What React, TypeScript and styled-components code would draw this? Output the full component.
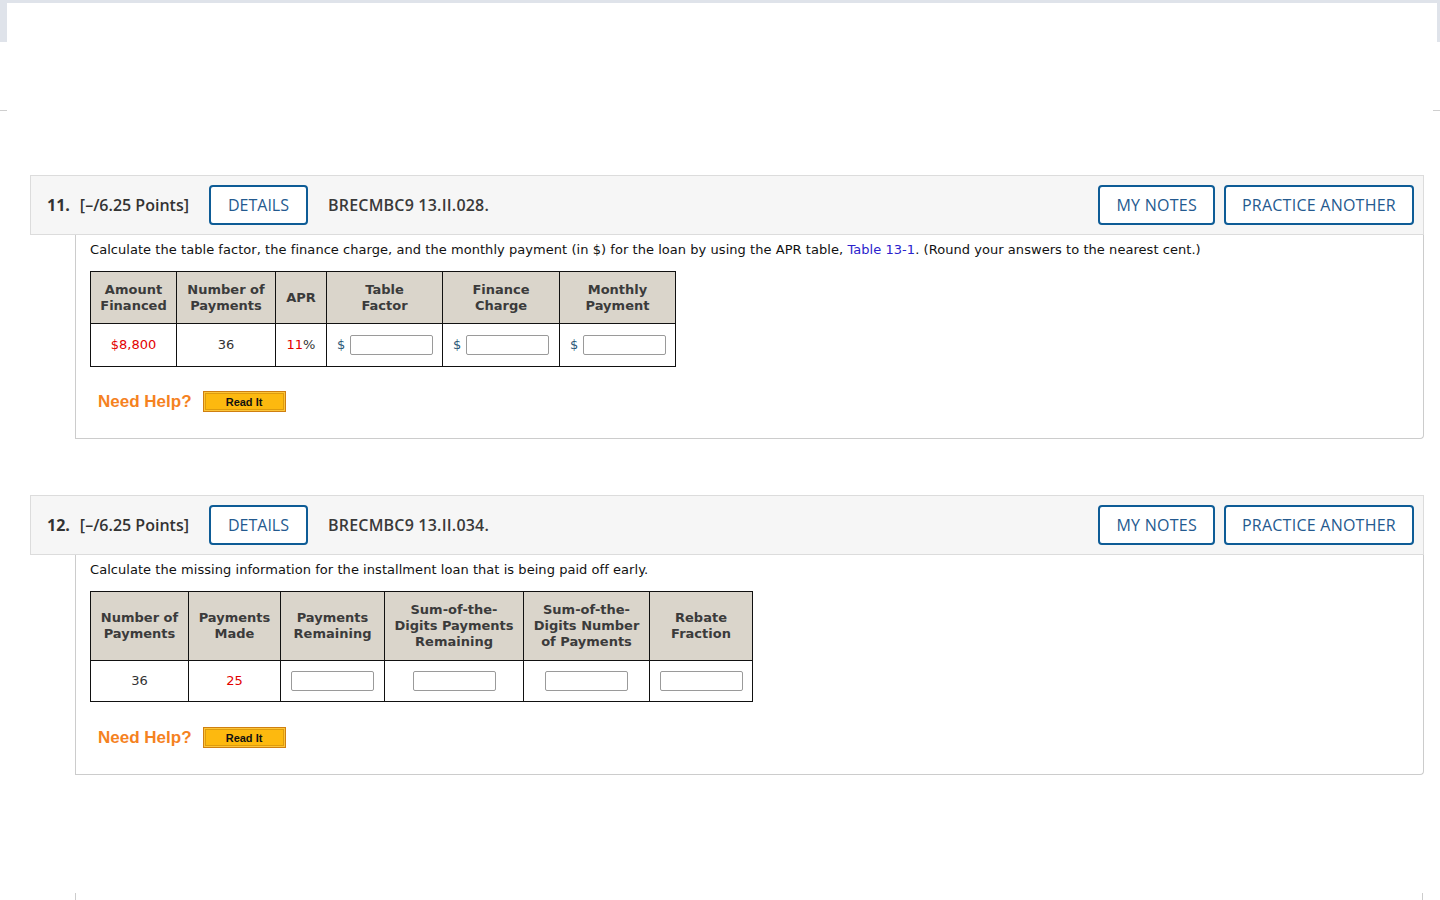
import React from "react";
import styled, { createGlobalStyle } from "styled-components";

const GlobalStyle = createGlobalStyle`
  html, body {
    margin: 0;
    padding: 0;
    background: #ffffff;
  }
  body {
    font-family: "DejaVu Sans", Verdana, sans-serif;
    color: #333333;
  }
`;

const Page = styled.div`
  width: 1440px;
  height: 900px;
  overflow: hidden;
  background: #fff;
`;

const TopFrame = styled.div`
  height: 42px;
  box-sizing: border-box;
  background: #dfe3ea;
  padding: 3px 3px 0 7px;
`;

const TopFrameInner = styled.div`
  height: 100%;
  background: #fff;
`;

const Ticks = styled.div`
  display: flex;
  justify-content: space-between;
  margin-top: 68px;
  height: 1px;
`;

const Tick = styled.span`
  display: block;
  width: 7px;
  height: 1px;
  background: #cfcfcf;
`;

const Question = styled.section<{ $top: number }>`
  margin-top: ${(p) => p.$top}px;
`;

const Header = styled.div`
  margin-left: 30px;
  width: 1394px;
  height: 60px;
  box-sizing: border-box;
  border: 1px solid #dcdcdc;
  background: #f6f6f6;
  display: flex;
  align-items: center;
  padding: 0 9px 0 16px;
  font-family: "Open Sans", sans-serif;
  font-size: 16px;
  color: #333;
`;

const Num = styled.span`
  font-weight: 700;
  margin-right: 10px;
`;

const Points = styled.span`
  font-weight: 600;
  margin-right: 20px;
`;

const Code = styled.span`
  font-weight: 600;
  margin-left: 20px;
  color: #3a3a3a;
  letter-spacing: 0.2px;
`;

const Spacer = styled.div`
  flex: 1;
`;

const HeadButton = styled.button<{ $wide?: boolean }>`
  height: 40px;
  box-sizing: border-box;
  border: 2px solid #0e5c96;
  border-radius: 4px;
  background: #fff;
  padding: ${(p) => (p.$wide ? "0 16px" : "0 17px")};
  margin: 0;
  font-family: "Open Sans", sans-serif;
  font-size: 16px;
  letter-spacing: ${(p) => (p.$wide ? "0.25px" : "0")};
  color: #245a8f;
  cursor: pointer;
  & + & {
    margin-left: 9px;
  }
`;

const Body = styled.div`
  margin-left: 75px;
  width: 1349px;
  box-sizing: border-box;
  border: 1px solid #cccccc;
  border-top: none;
  border-bottom-right-radius: 4px;
  padding: 7px 14px 26px 14px;
  font-size: 13px;
  line-height: 16px;
`;

const Prompt = styled.p`
  margin: 0 0 13px 0;
  color: #111;
  letter-spacing: 0.05px;
`;

const Link = styled.a`
  color: #2b22cc;
  text-decoration: none;
`;

const Grid = styled.table<{ $headBottom: number; $rowH: number }>`
  border-collapse: collapse;
  table-layout: fixed;
  & th {
    padding-bottom: ${(p) => p.$headBottom}px;
  }
  & td {
    height: ${(p) => p.$rowH}px;
  }
`;

const Th = styled.th`
  background: #dad5cb;
  border: 1px solid #111;
  font-weight: 700;
  color: #3b3b3b;
  padding: 10px 4px 9px;
  line-height: 16px;
  text-align: center;
  vertical-align: middle;
`;

const Td = styled.td<{ $left?: boolean }>`
  border: 1px solid #111;
  height: 42px;
  padding: 0 10px;
  text-align: ${(p) => (p.$left ? "left" : "center")};
  vertical-align: middle;
  color: #333;
  white-space: nowrap;
`;

const Given = styled.span`
  color: #e30000;
`;

const Dollar = styled.span`
  color: #2c5878;
  margin-right: 5px;
`;

const Answer = styled.input`
  width: 83px;
  height: 20px;
  box-sizing: border-box;
  border: 1px solid #9a9a9a;
  border-radius: 2px;
  vertical-align: middle;
  padding: 0 3px;
  margin: 0;
`;

const HelpRow = styled.div<{ $gap: number }>`
  display: flex;
  align-items: center;
  height: 21px;
  margin-top: ${(p) => p.$gap}px;
  padding-left: 8px;
`;

const NeedHelp = styled.span`
  font-family: "Liberation Sans", Arial, sans-serif;
  font-size: 17px;
  line-height: 20px;
  font-weight: 700;
  color: #f5821f;
  margin-right: 11px;
`;

const ReadIt = styled.button`
  width: 83px;
  height: 21px;
  box-sizing: border-box;
  border: 1px solid #cf7f10;
  background: #fdb90f;
  box-shadow: inset 0 0 0 1px #fbc53a, inset 0 0 0 2px #de9b0c;
  font-family: "Liberation Sans", Arial, sans-serif;
  font-size: 11px;
  font-weight: 700;
  color: #111;
  padding: 0;
  margin: 0;
  cursor: pointer;
`;

const NextBody = styled.div`
  margin: 118px 0 0 75px;
  width: 1348px;
  height: 20px;
  box-sizing: border-box;
  border-left: 1px solid #cccccc;
  border-right: 1px solid #cccccc;
`;

type HeadProps = { num: string; code: string };

const QuestionHeader = ({ num, code }: HeadProps) => (
  <Header>
    <Num>{num}</Num>
    <Points>[–/6.25 Points]</Points>
    <HeadButton>DETAILS</HeadButton>
    <Code>{code}</Code>
    <Spacer />
    <HeadButton $wide>MY NOTES</HeadButton>
    <HeadButton $wide>PRACTICE ANOTHER</HeadButton>
  </Header>
);

const Help = ({ gap }: { gap: number }) => (
  <HelpRow $gap={gap}>
    <NeedHelp>Need Help?</NeedHelp>
    <ReadIt>Read It</ReadIt>
  </HelpRow>
);

const Cols = ({ widths }: { widths: number[] }) => (
  <colgroup>
    {widths.map((w, i) => (
      <col key={i} style={{ width: w }} />
    ))}
  </colgroup>
);

const MoneyInput = () => (
  <Td $left>
    <Dollar>$</Dollar>
    <Answer type="text" />
  </Td>
);

export default function App() {
  return (
    <Page>
      <GlobalStyle />
      <TopFrame>
        <TopFrameInner />
      </TopFrame>
      <Ticks>
        <Tick />
        <Tick />
      </Ticks>

      <Question $top={64}>
        <QuestionHeader num="11." code="BRECMBC9 13.II.028." />
        <Body>
          <Prompt>
            Calculate the table factor, the finance charge, and the monthly
            payment (in $) for the loan by using the APR table,{" "}
            <Link href="#">Table 13-1</Link>. (Round your answers to the nearest
            cent.)
          </Prompt>
          <Grid style={{ width: 585 }} $headBottom={9} $rowH={42}>
            <Cols widths={[86, 99, 51, 116, 117, 116]} />
            <thead>
              <tr>
                <Th>
                  Amount
                  <br />
                  Financed
                </Th>
                <Th>
                  Number of
                  <br />
                  Payments
                </Th>
                <Th>APR</Th>
                <Th>
                  Table
                  <br />
                  Factor
                </Th>
                <Th>
                  Finance
                  <br />
                  Charge
                </Th>
                <Th>
                  Monthly
                  <br />
                  Payment
                </Th>
              </tr>
            </thead>
            <tbody>
              <tr>
                <Td>
                  <Given>$8,800</Given>
                </Td>
                <Td>36</Td>
                <Td>
                  <Given>11</Given>%
                </Td>
                <MoneyInput />
                <MoneyInput />
                <MoneyInput />
              </tr>
            </tbody>
          </Grid>
          <Help gap={24} />
        </Body>
      </Question>

      <Question $top={56}>
        <QuestionHeader num="12." code="BRECMBC9 13.II.034." />
        <Body>
          <Prompt>
            Calculate the missing information for the installment loan that is
            being paid off early.
          </Prompt>
          <Grid style={{ width: 662 }} $headBottom={10} $rowH={40}>
            <Cols widths={[98, 92, 104, 139, 126, 103]} />
            <thead>
              <tr>
                <Th>
                  Number of
                  <br />
                  Payments
                </Th>
                <Th>
                  Payments
                  <br />
                  Made
                </Th>
                <Th>
                  Payments
                  <br />
                  Remaining
                </Th>
                <Th>
                  Sum-of-the-
                  <br />
                  Digits Payments
                  <br />
                  Remaining
                </Th>
                <Th>
                  Sum-of-the-
                  <br />
                  Digits Number
                  <br />
                  of Payments
                </Th>
                <Th>
                  Rebate
                  <br />
                  Fraction
                </Th>
              </tr>
            </thead>
            <tbody>
              <tr>
                <Td>36</Td>
                <Td>
                  <Given>25</Given>
                </Td>
                <Td>
                  <Answer type="text" />
                </Td>
                <Td>
                  <Answer type="text" />
                </Td>
                <Td>
                  <Answer type="text" />
                </Td>
                <Td>
                  <Answer type="text" />
                </Td>
              </tr>
            </tbody>
          </Grid>
          <Help gap={25} />
        </Body>
      </Question>

      <NextBody />
    </Page>
  );
}
